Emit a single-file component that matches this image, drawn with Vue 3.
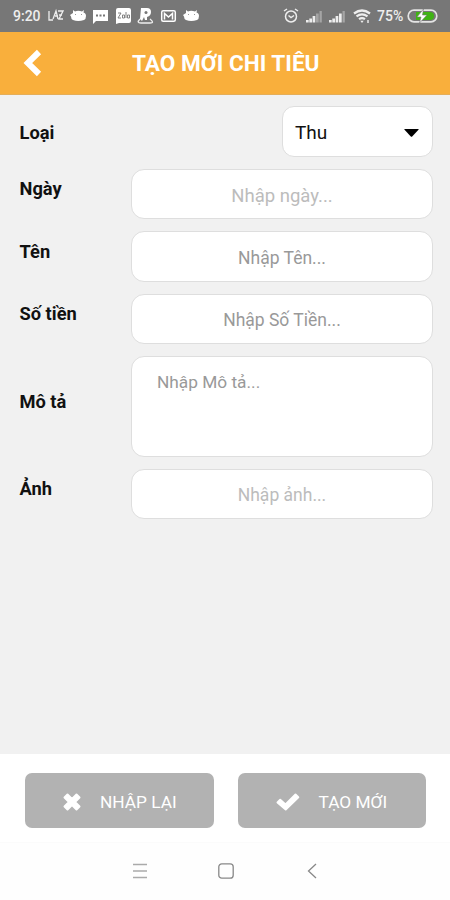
<script setup>
import { ref } from 'vue'

const kind = ref('Thu')
const fields = [
  { label: 'Ngày', hint: 'Nhập ngày...', tone: 'faint', wide: true },
  { label: 'Tên', hint: 'Nhập Tên...', tone: 'strong' },
  { label: 'Số tiền', hint: 'Nhập Số Tiền...', tone: 'strong' },
  { label: 'Mô tả', hint: 'Nhập Mô tả...', tone: 'strong', multiline: true },
  { label: 'Ảnh', hint: 'Nhập ảnh...', tone: 'faint' },
]
</script>

<template>
  <div class="screen">
    <div class="status">
      <span class="time">9:20</span>
      <div class="notices">
        <svg width="16" height="18" viewBox="0 0 16 18" fill="none" stroke="#eee" stroke-width="1.3"><path d="M1 4v9h4M5 12l3-8 2 8M7 9h3M10 4h5l-4 8h4M11 8h3" /></svg>
        <svg width="17" height="18" viewBox="0 0 17 18"><path d="M3 3l2 1.500Q8 3 12 4.500L14 3l-.5 2.500Q16 6 16 9t-2 4q-6 2-11 0-2-1-2-3.500L0 8l3-2z" fill="#fff" /><path d="M5 7.500h1M11 7.500h1" stroke="#999" stroke-width="1" /></svg>
        <svg width="17" height="18" viewBox="0 0 17 18"><path d="M1 3h15v11H4l-3 3z" fill="#fff" /><path d="M4 8.500h2M7.500 8.500h2M11 8.500h2" stroke="#777" stroke-width="1.800" /></svg>
        <svg width="17" height="18" viewBox="0 0 17 18"><path d="M3 1h11q2 0 2 2v11q0 2-2 2H4l-3 1V3q0-2 2-2" fill="#fff" /><path d="M3 6h3l-3 5h3M7.500 8h2v3h-2zM11 5v6M12.500 8h2v3h-2z" fill="none" stroke="#777" stroke-width=".9" /></svg>
        <svg width="17" height="18" viewBox="0 0 17 18"><path d="M4 1h6q4 0 4 4t-4 5v3H8l-1-3-2 4-2-2z" fill="#fff" /><circle cx="9" cy="5.500" r="1.500" fill="#777" /><path d="M3 12q-4 4 1 4h9q5 0 0-4" fill="none" stroke="#eee" stroke-width="1.300" /></svg>
        <svg width="17" height="18" viewBox="0 0 17 18"><rect x="1.700" y="3.700" width="13.600" height="10.600" rx="1.500" fill="none" stroke="#fff" stroke-width="1.500" /><path d="M4.500 12.500V6.500l4 3.500 4-3.500v6" fill="none" stroke="#fff" stroke-width="1.500" /></svg>
        <svg width="17" height="18" viewBox="0 0 17 18"><path d="M3 3l2 1.500Q8 3 12 4.500L14 3l-.5 2.500Q16 6 16 9t-2 4q-6 2-11 0-2-1-2-3.500L0 8l3-2z" fill="#fff" /><path d="M5 7.500h1M11 7.500h1" stroke="#999" stroke-width="1" /></svg>
      </div>
      <div class="device">
        <svg class="alarm" width="16" height="18" viewBox="0 0 16 18" fill="none" stroke="#eee" stroke-width="1.500"><circle cx="8" cy="9.500" r="5.500" /><path d="M1 4l3-2M12 2l3 2M5.500 8.500L8 10.500l3-2" /></svg>
        <svg v-for="n in 2" :key="n" class="signal" width="17" height="18" viewBox="0 0 17 18"><path d="M0 13h2.700v2.500H0zM3.300 11.500H6v4H3.300zM6.600 9h2.700v6.500H6.600z" fill="#eee" /><path d="M10 6.500h2.700v9H10z" :class="n === 1 ? 'weak' : 'full'" /><path d="M13.500 4h2.300v11.500h-2.300z" class="weak" /></svg>
        <svg class="wifi" width="18" height="18" viewBox="0 0 18 18" fill="none" stroke="#eee" stroke-width="2.200"><path d="M1 6.500q8-6 16 0M3.500 9.400q5.500-4 11 0M6 12.200q3-2 6 0" /><path d="M7.300 13.800h3.400L9 16z" fill="#eee" stroke="none" /><path d="M15 13v3" stroke-width="1.400" /></svg>
        <span class="percent">75%</span>
        <svg width="31" height="18" viewBox="0 0 31 18"><rect x="1.200" y="3.200" width="28.600" height="11.600" rx="5.800" fill="none" stroke="#e4e4e4" stroke-width="1.700" /><path d="M9 5h14q4 0 4 4t-4 4H9z" fill="#3fb314" /><path d="M16.500 2L10 10h4l-1.500 6L20 8h-4.500z" fill="#fff" stroke="#777" stroke-width=".6" /></svg>
      </div>
    </div>

    <header class="bar">
      <svg class="back" width="20" height="28" viewBox="0 0 20 28" fill="none" stroke="#fff" stroke-width="6"><path d="M17 3L5.800 14 17 25" /></svg>
      <h1>TẠO MỚI CHI TIÊU</h1>
    </header>

    <main class="form">
      <div class="row first">
        <span class="label">Loại</span>
        <button class="select" type="button">
          <span>{{ kind }}</span>
          <svg width="15" height="8" viewBox="0 0 15 8"><path d="M.8 0h13.400q.8 0 .3.700L8.200 7.500q-.7.700-1.400 0L.5.700Q0 0 .8 0z" /></svg>
        </button>
      </div>
      <label v-for="f in fields" :key="f.label" class="row" :class="{ tall: f.multiline }">
        <span class="label">{{ f.label }}</span>
        <textarea v-if="f.multiline" class="control" :class="f.tone" :placeholder="f.hint"></textarea>
        <input v-else class="control" :class="[f.tone, { wide: f.wide }]" :placeholder="f.hint" />
      </label>
    </main>

    <footer class="actions">
      <button class="action" type="button">
        <svg class="cross" width="18" height="18" viewBox="0 0 18 18" fill="#fff" stroke="#fff" stroke-width="2" stroke-linejoin="round"><path d="M4.500 1.500L9 6l4.500-4.500 3 3L12 9l4.500 4.500-3 3L9 12l-4.500 4.500-3-3L6 9 1.500 4.500z" /></svg>
        <span>NHẬP LẠI</span>
      </button>
      <button class="action" type="button">
        <svg class="check" width="24" height="18" viewBox="0 0 24 18" fill="#fff" stroke="#fff" stroke-width="2" stroke-linejoin="round"><path d="M4.200 6.800l5.300 4.700L19.500 1.500l2.800 2.700L9.700 16.500 1.500 9.500z" /></svg>
        <span>TẠO MỚI</span>
      </button>
    </footer>

    <nav class="system">
      <svg width="16" height="16" viewBox="0 0 16 16" fill="none" stroke="#aaa" stroke-width="1.300"><path d="M1 1.500h14M1 8h14M1 14.500h14" /></svg>
      <svg width="16" height="16" viewBox="0 0 16 16" fill="none" stroke="#888" stroke-width="1.300"><rect x=".8" y=".8" width="14.400" height="14.400" rx="3" /></svg>
      <svg width="16" height="16" viewBox="0 0 16 16" fill="none" stroke="#888" stroke-width="1.300"><path d="M12 1L4.500 8l7.500 7" /></svg>
    </nav>
  </div>
</template>

<style>
body {
  margin: 0;
}
</style>

<style scoped>
.screen {
  display: flex;
  flex-direction: column;
  width: 450px;
  height: 900px;
  overflow: hidden;
  background: #f1f1f1;
  font-family: Roboto, sans-serif;
}
.screen * {
  box-sizing: border-box;
}
svg {
  display: block;
  flex: none;
}
button,
input,
textarea {
  margin: 0;
  font-family: inherit;
}
.status {
  display: flex;
  align-items: center;
  height: 32px;
  padding: 0 12px 0 13px;
  background: #777;
  color: #eee;
  font-size: 14px;
  font-weight: 500;
}
.time {
  width: 35px;
}
.notices {
  display: flex;
  gap: 5.600px;
}
.device {
  display: flex;
  align-items: center;
  margin-left: auto;
}
.alarm {
  margin-right: 7px;
}
.signal {
  margin-right: 6px;
}
.wifi {
  margin: 0 6px 0 1px;
}
.weak {
  fill: #a5a5a5;
}
.full {
  fill: #eee;
}
.percent {
  width: 30px;
  font-size: 14px;
}
.bar {
  display: flex;
  align-items: center;
  height: 63px;
  padding: 0 22px;
  background: #f9af3c;
  border-bottom: 1px solid #e4ae5a;
}
.back {
  margin-left: -0.500px;
}
.bar h1 {
  flex: 1;
  margin: 2px 18px 0 0;
  color: #fff;
  font-size: 22.600px;
  font-weight: 700;
  line-height: 30px;
  text-align: center;
}
.form {
  flex: 1;
  padding: 11.400px 17px 0 19.500px;
}
.row {
  display: flex;
  align-items: center;
  justify-content: space-between;
  height: 50.500px;
  margin-bottom: 12px;
}
.row.tall {
  height: 101px;
  margin-bottom: 11.500px;
}
.label {
  margin-bottom: 10px;
  color: #111;
  font-size: 18.300px;
  font-weight: 700;
  line-height: 24px;
}
.first .label {
  margin: 3px 0 0;
}
.tall .label {
  margin-bottom: 10px;
}
.select {
  display: flex;
  align-items: center;
  justify-content: space-between;
  width: 151px;
  height: 51px;
  padding: 2px 13px 0 12px;
  border: 1px solid #dedede;
  border-radius: 12px;
  background: #fff;
  color: #111;
  font-size: 19px;
}
.control {
  display: block;
  width: 302px;
  height: 100%;
  padding: 2px 16px 0;
  border: 1px solid #dedede;
  border-radius: 13px;
  outline: none;
  background: #fff;
  font-size: 17.500px;
  text-align: center;
}
.control.wide {
  padding-top: 3px;
  font-size: 18.500px;
}
textarea.control {
  padding: 14px 25px;
  font-size: 17.300px;
  text-align: left;
  line-height: 22px;
  resize: none;
}
.control::placeholder {
  color: #999;
  opacity: 1;
}
.control.faint::placeholder {
  color: #bcbcbc;
}
.actions {
  display: flex;
  gap: 24px;
  height: 89px;
  padding: 19px 24px 14px 25px;
  background: #fff;
  border-bottom: 1px solid #fbfbfb;
}
.action {
  display: flex;
  flex: 1;
  align-items: center;
  gap: 19px;
  padding: 2px 0 0 38px;
  border: 0;
  border-radius: 7px;
  background: #b2b2b2;
  color: #fff;
  font-size: 17.300px;
}
.system {
  display: flex;
  align-items: center;
  justify-content: center;
  gap: 70px;
  height: 57px;
  padding: 0 0 2px 2px;
  background: #fefefe;
}
</style>
